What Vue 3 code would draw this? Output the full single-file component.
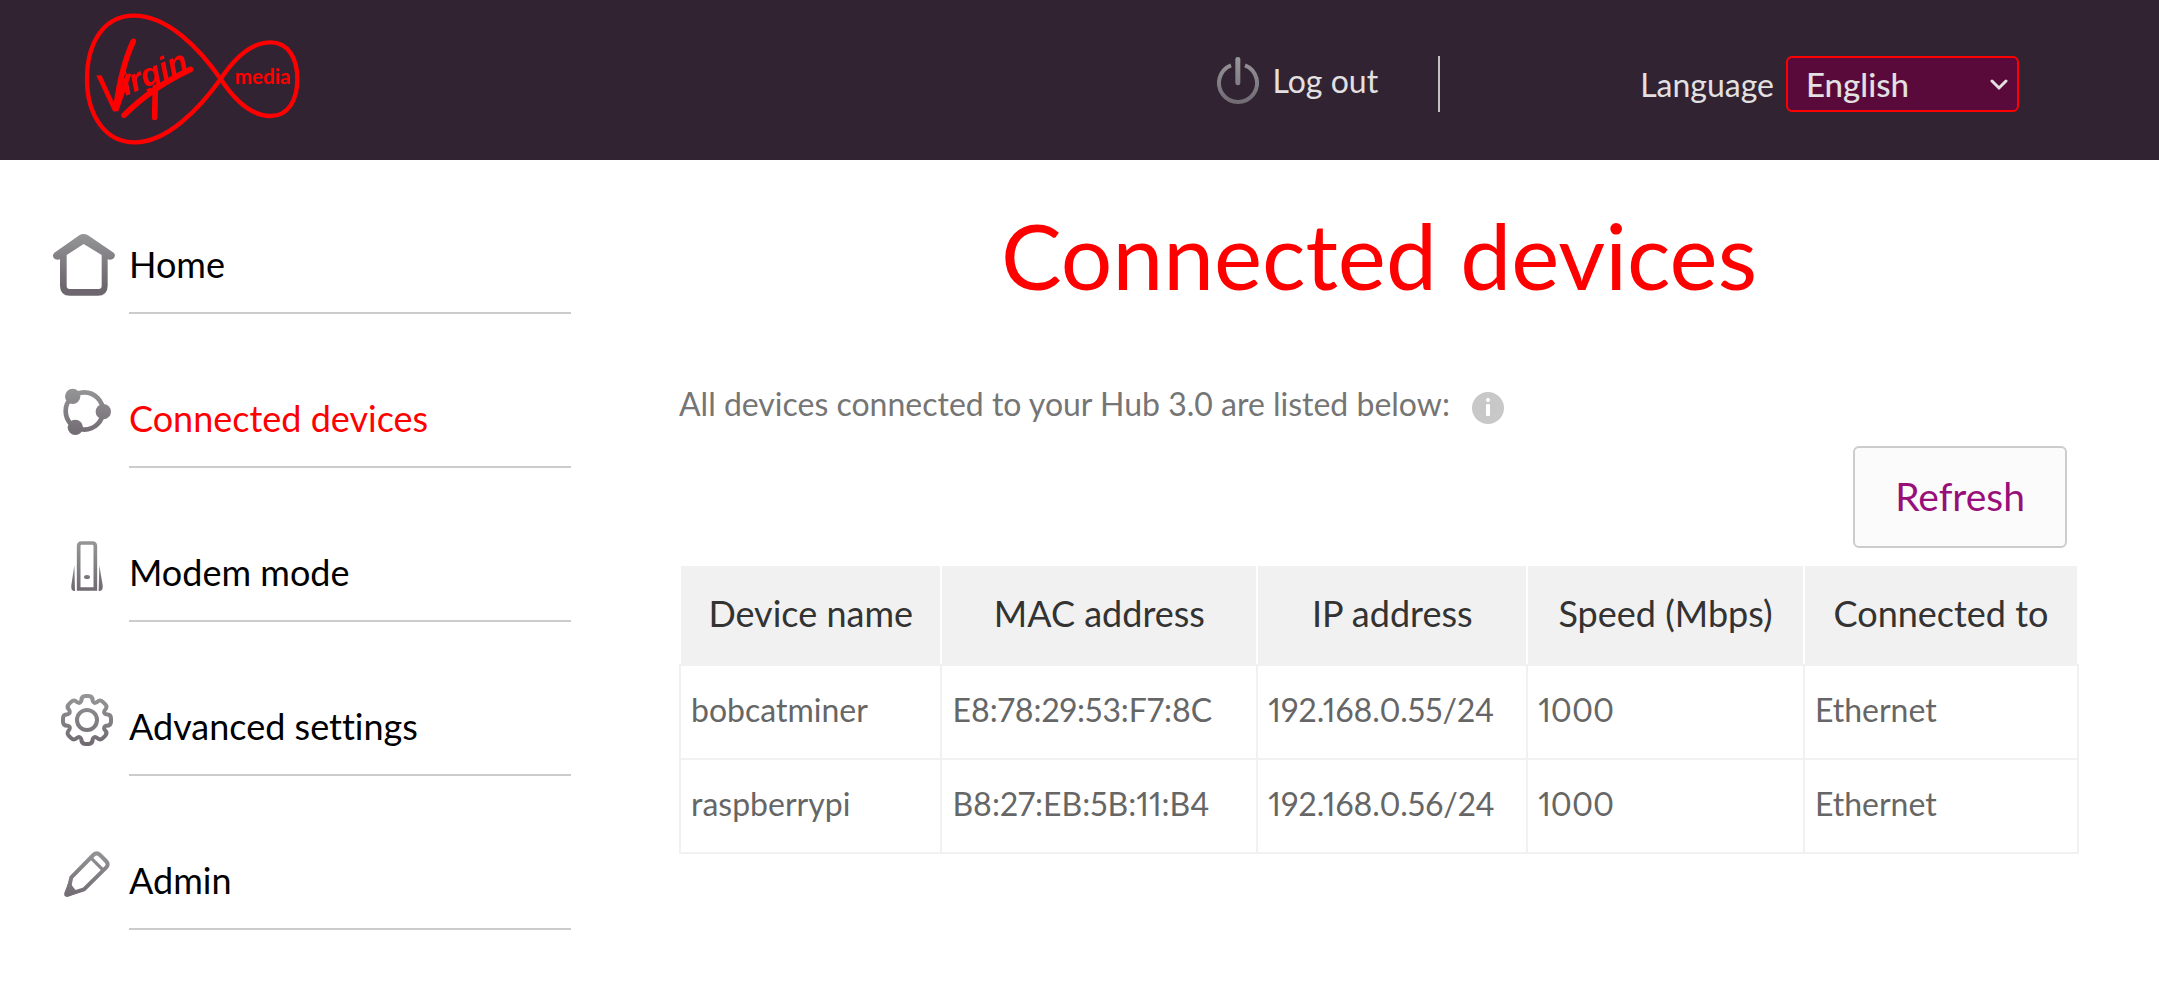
<script setup>
import { ref } from 'vue'

const language = ref('English')

const navItems = [
  { id: 'home', label: 'Home' },
  { id: 'devices', label: 'Connected devices', active: true },
  { id: 'modem', label: 'Modem mode' },
  { id: 'settings', label: 'Advanced settings' },
  { id: 'admin', label: 'Admin' },
]

const columns = ['Device name', 'MAC address', 'IP address', 'Speed (Mbps)', 'Connected to']

const devices = [
  { name: 'bobcatminer', mac: 'E8:78:29:53:F7:8C', ip: '192.168.0.55/24', speed: '1000', link: 'Ethernet' },
  { name: 'raspberrypi', mac: 'B8:27:EB:5B:11:B4', ip: '192.168.0.56/24', speed: '1000', link: 'Ethernet' },
]

// Outline of an eight-lobed cog centred on the given point.
function cogPath(cx, cy) {
  const at = (x, y, k) => {
    const a = (k * Math.PI) / 4
    const px = cx + x * Math.cos(a) - y * Math.sin(a)
    const py = cy + x * Math.sin(a) + y * Math.cos(a)
    return `${px.toFixed(1)} ${py.toFixed(1)}`
  }
  let d = `M${at(-17, -58, 0)}`
  for (let k = 0; k < 8; k++) {
    d += `Q${at(-17, -72, k)} ${at(-5, -72, k)}L${at(5, -72, k)}`
    d += `Q${at(17, -72, k)} ${at(17, -58, k)}`
    d += `Q${at(20, -48, k)} ${at(-17, -58, k + 1)}`
  }
  return d + 'Z'
}
const cog = cogPath(141, 114)
</script>

<template>
  <div class="page">
    <header class="topbar">
      <a href="#" class="brand" aria-label="Virgin Media">
        <svg class="brand-logo" viewBox="0 0 750 480">
          <path
            class="brand-line"
            d="M452 237C385 140 290 47 192 47C100 47 51 130 51 237C51 345 105 427 195 427C290 427 385 330 452 237C500 165 550 127 602 127C655 127 682 175 682 237C682 300 655 348 602 348C550 348 500 310 452 237Z"
          />
          <g transform="translate(137 334) rotate(-3)">
            <text class="brand-v" x="0" y="0">V</text>
          </g>
          <g transform="translate(166 287) rotate(-22)">
            <text class="brand-script" x="0" y="0">irgin</text>
          </g>
          <path class="brand-swash" d="M138 322Q154 200 190 124" />
          <path class="brand-swash" d="M162 346Q245 262 362 208" />
          <path class="brand-swash" d="M256 262L254 352" />
          <text class="brand-media" x="494" y="252">media</text>
        </svg>
      </a>

      <div class="session">
        <a href="#" class="logout">
          <svg class="power" viewBox="72 48 126 144" aria-hidden="true">
            <defs>
              <linearGradient id="grad-power" gradientUnits="userSpaceOnUse" x1="0" y1="50" x2="0" y2="190">
                <stop offset="0" stop-color="#98979b" />
                <stop offset="1" stop-color="#716b74" />
              </linearGradient>
            </defs>
            <path d="M114 76A57 57 0 1 0 156 76" fill="none" stroke="url(#grad-power)" stroke-width="12" />
            <rect x="127" y="51" width="15" height="85" rx="7" fill="url(#grad-power)" />
          </svg>
          <span>Log out</span>
        </a>
        <div class="language">
          <label for="language">Language</label>
          <div class="select-wrap">
            <select id="language" v-model="language">
              <option>English</option>
            </select>
            <svg class="chevron" viewBox="0 0 18 12" aria-hidden="true">
              <path d="M2 2L9 9L16 2" />
            </svg>
          </div>
        </div>
      </div>
    </header>

    <div class="body">
      <nav class="sidebar">
        <a v-for="item in navItems" :key="item.id" href="#" class="nav-item" :class="{ active: item.active }">
          <svg class="nav-icon" viewBox="0 0 240 240" aria-hidden="true">
            <defs>
              <linearGradient :id="'grad-' + item.id" gradientUnits="userSpaceOnUse" x1="0" y1="42" x2="0" y2="200">
                <stop offset="0" stop-color="#959597" />
                <stop offset="1" stop-color="#6d666e" />
              </linearGradient>
            </defs>
            <path
              v-if="item.id === 'home'"
              fill="url(#grad-home)"
              fill-rule="evenodd"
              d="M118 46Q131 38 144 46L221 98Q228 105 222 114Q215 122 203 118V197Q203 227 173 227H90Q60 227 60 197V118Q48 122 41 114Q36 105 43 98ZM131 72L80 105V198Q80 207 89 207H176Q185 207 185 198V105Z"
            />
            <template v-else-if="item.id === 'devices'">
              <circle cx="133" cy="111" r="56" fill="none" stroke="url(#grad-devices)" stroke-width="14" />
              <circle cx="98" cy="67" r="23" fill="url(#grad-devices)" />
              <circle cx="190" cy="113" r="23" fill="url(#grad-devices)" />
              <circle cx="106" cy="160" r="23" fill="url(#grad-devices)" />
            </template>
            <template v-else-if="item.id === 'modem'">
              <path
                fill="none"
                stroke="url(#grad-modem)"
                stroke-width="11"
                d="M116 183V54Q116 45 125 45H157Q166 45 166 54V183Z"
              />
              <ellipse cx="141" cy="147" rx="9" ry="6" fill="url(#grad-modem)" />
              <path fill="url(#grad-modem)" d="M103 112L105 189H101Q92 187 94 172Z" />
              <path fill="url(#grad-modem)" d="M178 112L176 189H180Q190 187 188 172Z" />
            </template>
            <template v-else-if="item.id === 'settings'">
              <path fill="none" stroke="url(#grad-settings)" stroke-width="12" :d="cog" />
              <circle cx="141" cy="114" r="30" fill="none" stroke="url(#grad-settings)" stroke-width="12" />
            </template>
            <template v-else>
              <path
                fill="none"
                stroke="url(#grad-admin)"
                stroke-width="12"
                stroke-linejoin="round"
                d="M94 124L160 57Q170 47 180 57L198 75Q208 85 198 95L132 160L82 176Z"
              />
              <path fill="url(#grad-admin)" d="M88 132L73 170Q70 184 84 182L122 168L106 161L97 150Z" />
              <path fill="none" stroke="url(#grad-admin)" stroke-width="10" d="M155 68L188 101" />
            </template>
          </svg>
          <span class="nav-label">{{ item.label }}</span>
        </a>
      </nav>

      <main class="content">
        <h1>Connected devices</h1>
        <div class="intro">
          <p>All devices connected to your Hub 3.0 are listed below:</p>
          <button type="button" class="info" aria-label="More information">
            <svg viewBox="0 0 32 32" aria-hidden="true">
              <circle cx="16" cy="16" r="16" fill="#c8c8c8" />
              <circle cx="16" cy="8" r="2" fill="#fff" />
              <rect x="14" y="12" width="4" height="12" rx="1" fill="#fff" />
            </svg>
          </button>
        </div>
        <div class="toolbar">
          <button type="button" class="refresh">Refresh</button>
        </div>
        <table>
          <colgroup>
            <col class="col-name" />
            <col class="col-mac" />
            <col class="col-ip" />
            <col class="col-speed" />
            <col class="col-link" />
          </colgroup>
          <thead>
            <tr>
              <th v-for="column in columns" :key="column" scope="col">{{ column }}</th>
            </tr>
          </thead>
          <tbody>
            <tr v-for="device in devices" :key="device.mac">
              <td>{{ device.name }}</td>
              <td>{{ device.mac }}</td>
              <td>{{ device.ip }}</td>
              <td>{{ device.speed }}</td>
              <td>{{ device.link }}</td>
            </tr>
          </tbody>
        </table>
      </main>
    </div>
  </div>
</template>

<style>
body {
  margin: 0;
  background: #fff;
}
</style>

<style scoped>
.page,
.page button,
.page select {
  font-family: Lato, "Liberation Sans", sans-serif;
  font-variant-ligatures: none;
}

.page * {
  box-sizing: border-box;
}

.topbar {
  display: flex;
  align-items: center;
  justify-content: space-between;
  height: 160px;
  padding: 0 140px 0 70px;
  background: #322332;
  color: #e3e0e2;
  font-size: 32px;
}

.brand {
  display: block;
}

.brand-logo {
  display: block;
  width: 250px;
  height: 160px;
}

.brand-line {
  fill: none;
  stroke: #f00;
  stroke-width: 13;
}

.brand-swash {
  fill: none;
  stroke: #f00;
  stroke-width: 17;
  stroke-linecap: round;
}

.brand-v,
.brand-script {
  fill: #f00;
  font-family: "Liberation Sans", sans-serif;
  font-weight: 700;
}

.brand-v {
  font-size: 160px;
  font-weight: 400;
  text-anchor: middle;
}

.brand-script {
  font-size: 96px;
  font-style: italic;
}

.brand-media {
  fill: #f00;
  font-family: Lato, sans-serif;
  font-size: 62px;
  font-weight: 700;
}

.session {
  display: flex;
  align-items: center;
}

.logout {
  display: flex;
  align-items: center;
  gap: 14px;
  height: 56px;
  padding: 0 60px 8px 0;
  border-right: 2px solid #c4c0c4;
  margin-top: 8px;
  color: inherit;
  text-decoration: none;
}

.power {
  width: 42px;
  height: 48px;
}

.language {
  display: flex;
  align-items: center;
  gap: 12px;
  margin: 8px 0 0 200px;
}

.select-wrap {
  position: relative;
}

.select-wrap select {
  appearance: none;
  display: block;
  width: 233px;
  height: 56px;
  padding: 0 48px 0 18px;
  border: 2px solid #f00;
  border-radius: 6px;
  background: #5a0a3a;
  color: #e3e0e2;
  font-size: 33px;
  font-weight: 500;
}

.chevron {
  position: absolute;
  right: 11px;
  top: 23px;
  width: 18px;
  height: 12px;
  pointer-events: none;
}

.chevron path {
  fill: none;
  stroke: #e3e0e2;
  stroke-width: 3;
  stroke-linecap: round;
}

.body {
  display: flex;
  gap: 108px;
  padding: 0 80px 0 40px;
}

.sidebar {
  flex: 0 0 531px;
}

.nav-item {
  display: flex;
  gap: 9px;
  height: 154px;
  padding-top: 60px;
  color: #000;
  font-size: 36px;
  text-decoration: none;
}

.nav-item.active {
  color: #f00;
}

.nav-icon {
  flex: none;
  width: 80px;
  height: 80px;
}

.nav-label {
  flex: 1;
  padding-top: 22px;
  border-bottom: 2px solid #ccc;
  line-height: 44px;
}

.content {
  flex: 1;
  min-width: 0;
}

h1 {
  margin: 40px 0 0;
  color: #f00;
  font-size: 91px;
  font-weight: 400;
  line-height: 110px;
  text-align: center;
}

.intro {
  display: flex;
  align-items: center;
  gap: 22px;
  height: 40px;
  margin-top: 74px;
}

.intro p {
  margin: 0;
  color: #757575;
  font-size: 32px;
  line-height: 40px;
}

.info {
  margin-top: 8px;
  padding: 0;
  border: 0;
  background: none;
}

.info svg {
  display: block;
  width: 32px;
  height: 32px;
}

.toolbar {
  display: flex;
  justify-content: flex-end;
  margin: 22px 12px 16px 0;
}

.refresh {
  height: 102px;
  padding: 0 40px 2px;
  border: 2px solid #ccc;
  border-radius: 6px;
  background: #fbfbfb;
  color: #990f7a;
  font-size: 39px;
}

table {
  width: 100%;
  border-collapse: collapse;
  table-layout: fixed;
}

.col-name {
  width: 18.7%;
}

.col-mac {
  width: 22.6%;
}

.col-ip {
  width: 19.3%;
}

.col-speed {
  width: 19.8%;
}

.col-link {
  width: 19.6%;
}

th {
  height: 100px;
  padding: 0 0 4px;
  border: 2px solid #fff;
  border-bottom-color: #f1f1f1;
  background: #f1f1f1;
  color: #333;
  font-size: 36px;
  font-weight: 400;
}

td {
  height: 94px;
  padding: 0 10px 6px;
  border: 2px solid #f1f1f1;
  color: #666;
  font-size: 32px;
  font-variant-numeric: proportional-nums;
}
</style>
